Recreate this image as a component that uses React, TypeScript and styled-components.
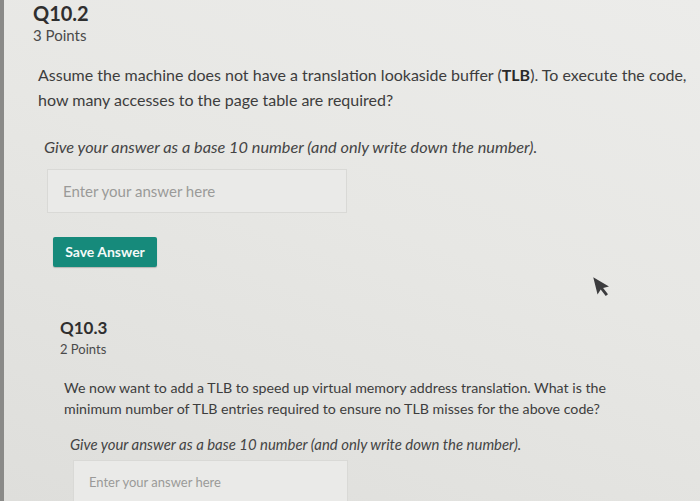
import React from 'react';
import styled, { createGlobalStyle } from 'styled-components';

const GlobalStyle = createGlobalStyle`
  html, body {
    margin: 0;
    padding: 0;
    width: 700px;
    height: 501px;
    overflow: hidden;
  }
  body {
    font-family: Lato, "Liberation Sans", sans-serif;
    background: #e6e6e3;
  }
`;

const Screen = styled.div`
  position: relative;
  width: 700px;
  height: 501px;
  box-sizing: border-box;
  border-left: 4px solid #8a8a88;
  background: linear-gradient(200deg, #ececea 0%, #e7e7e4 45%, #dededb 100%);
  overflow: hidden;
  display: flex;
  flex-direction: column;
`;

const Question = styled.section<{ $indent: number; $top: number }>`
  display: flex;
  flex-direction: column;
  padding-left: ${p => p.$indent}px;
  padding-top: ${p => p.$top}px;
  color: #3b3b3b;
`;

const QTitle = styled.h2<{ $size: number }>`
  margin: 0;
  font-size: ${p => p.$size}px;
  font-weight: 700;
  line-height: 1.2;
  color: #2f2f2f;
`;

const QPoints = styled.div<{ $size: number; $gap: number }>`
  font-size: ${p => p.$size}px;
  line-height: 1.3;
  color: #4a4a4a;
  margin-top: ${p => p.$gap}px;
`;

const Prompt = styled.p<{ $size: number; $line: number; $gap: number; $shift: number }>`
  margin: ${p => p.$gap}px 0 0 ${p => p.$shift}px;
  font-size: ${p => p.$size}px;
  line-height: ${p => p.$line}px;
  color: #3d3d3d;
  max-width: 660px;
`;

const Strong = styled.strong`
  font-weight: 700;
  color: #2a2a2a;
`;

const Hint = styled.p<{ $size: number; $gap: number; $shift: number }>`
  margin: ${p => p.$gap}px 0 0 ${p => p.$shift}px;
  font-size: ${p => p.$size}px;
  font-style: italic;
  color: #444;
`;

const AnswerBox = styled.div<{ $w: number; $h: number; $size: number; $gap: number; $shift: number }>`
  margin: ${p => p.$gap}px 0 0 ${p => p.$shift}px;
  width: ${p => p.$w}px;
  height: ${p => p.$h}px;
  box-sizing: border-box;
  border: 1px solid #d9d9d6;
  background: #eaeae8;
  display: flex;
  align-items: center;
  padding-left: 15px;
  font-size: ${p => p.$size}px;
  color: #9a9a98;
`;

const SaveButton = styled.button`
  margin: 24px 0 0 20px;
  align-self: flex-start;
  width: 104px;
  height: 30px;
  border: none;
  border-radius: 2px;
  background: #168a7b;
  color: #f4f9f8;
  font-family: Lato, "Liberation Sans", sans-serif;
  font-size: 14px;
  font-weight: 700;
  box-shadow: 0 1px 1px rgba(0, 0, 0, 0.2);
`;

const Pointer = styled.svg`
  position: absolute;
  left: 589px;
  top: 274px;
`;

export default function App() {
  return (
    <>
      <GlobalStyle />
      <Screen>
        <Question $indent={29} $top={1}>
          <QTitle $size={20}>Q10.2</QTitle>
          <QPoints $size={15} $gap={1}>3 Points</QPoints>
          <Prompt $size={16} $line={25} $gap={16} $shift={5}>
            Assume the machine does not have a translation lookaside buffer (<Strong>TLB</Strong>). To execute the code,
            how many accesses to the page table are required?
          </Prompt>
          <Hint $size={16.3} $gap={25} $shift={11}>
            Give your answer as a base 10 number (and only write down the number).
          </Hint>
          <AnswerBox $w={300} $h={44} $size={15} $gap={13} $shift={14}>
            Enter your answer here
          </AnswerBox>
          <SaveButton>Save Answer</SaveButton>
        </Question>

        <Question $indent={56} $top={51}>
          <QTitle $size={17}>Q10.3</QTitle>
          <QPoints $size={13} $gap={3}>2 Points</QPoints>
          <Prompt $size={14.2} $line={21} $gap={19} $shift={4}>
            We now want to add a TLB to speed up virtual memory address translation. What is the
            <br />
            minimum number of TLB entries required to ensure no TLB misses for the above code?
          </Prompt>
          <Hint $size={14.9} $gap={16} $shift={10}>
            Give your answer as a base 10 number (and only write down the number).
          </Hint>
          <AnswerBox $w={275} $h={44} $size={13} $gap={7} $shift={13}>
            Enter your answer here
          </AnswerBox>
        </Question>

        <Pointer width="20" height="26" viewBox="0 0 16 22">
          <path
            d="M2 1 L2 16 L5.6 12.6 L8.4 19 L10.6 18 L7.9 11.8 L13 11.8 Z"
            fill="#3c3c3e"
            transform="rotate(-14 8 11)"
          />
        </Pointer>
      </Screen>
    </>
  );
}
